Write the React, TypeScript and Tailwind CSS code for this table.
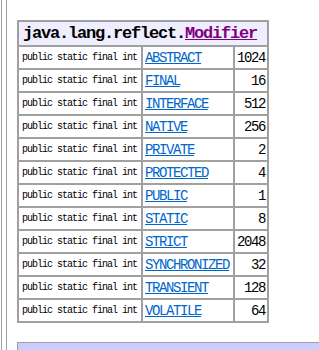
const fields: [string, number][] = [
  ['ABSTRACT', 1024],
  ['FINAL', 16],
  ['INTERFACE', 512],
  ['NATIVE', 256],
  ['PRIVATE', 2],
  ['PROTECTED', 4],
  ['PUBLIC', 1],
  ['STATIC', 8],
  ['STRICT', 2048],
  ['SYNCHRONIZED', 32],
  ['TRANSIENT', 128],
  ['VOLATILE', 64],
]

const mono = "font-['Liberation_Mono','DejaVu_Sans_Mono',monospace]"

export default function App() {
  return (
    <div className="flex h-[350px] w-[319px] overflow-hidden bg-white">
      {/* frame edge */}
      <div className="ml-px w-[6px] shrink-0 border-x border-[#a0a0a0]" />

      <div className="flex min-w-0 flex-1 flex-col">
        <div className="h-px w-[236px] bg-[#a0a0a0]" />

        <table
          className={`ml-[10px] mt-[20px] w-[252px] table-fixed border-separate border-spacing-0 border border-[#a0a0a0] ${mono}`}
        >
          <colgroup>
            <col className="w-[124px]" />
            <col className="w-[92px]" />
            <col className="w-[34px]" />
          </colgroup>
          <thead>
            <tr>
              <th
                colSpan={3}
                className="h-[25px] border border-[#a0a0a0] bg-[#eeeeff] pl-[4px] text-left align-middle text-[17px] font-bold leading-none tracking-[-1.2px] text-black"
              >
                java.lang.reflect.
                <a href="#" className="text-[#800080] underline">
                  Modifier
                </a>
              </th>
            </tr>
          </thead>
          <tbody>
            {fields.map(([name, value]) => (
              <tr key={name}>
                <td className="h-[23px] whitespace-nowrap border border-[#a0a0a0] pl-[3px] align-middle text-[10px] leading-none tracking-[-1px] text-black">
                  public static final int
                </td>
                <td className="border border-[#a0a0a0] pl-[2px] align-middle text-[14px] leading-none tracking-[-1.4px]">
                  <a href="#" className="text-[#0066cc] underline">
                    {name}
                  </a>
                </td>
                <td className="border border-[#a0a0a0] pr-[2px] text-right align-middle text-[14px] leading-none tracking-[-1.4px] text-black">
                  {value}
                </td>
              </tr>
            ))}
          </tbody>
        </table>

        {/* next table peeking in at the bottom */}
        <div className="ml-[10px] mt-[19px] h-[20px] w-[400px] shrink-0 border border-[#a0a0a0] bg-[#ccccff]" />
      </div>
    </div>
  )
}
